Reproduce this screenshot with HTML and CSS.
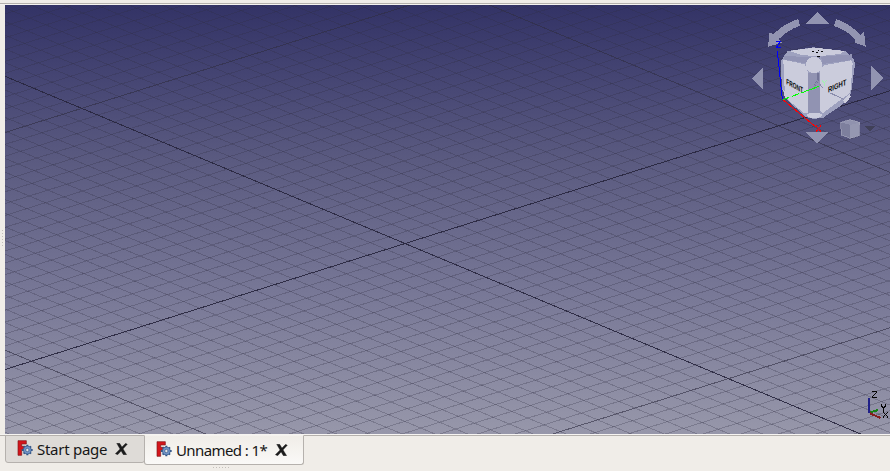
FILE: index.html
```html
<!DOCTYPE html>
<html lang="en">
<head>
<meta charset="utf-8">
<title>Unnamed : 1*</title>
<link rel="stylesheet" href="styles.css">
</head>
<body>
<div class="window">
  <div class="toolbar-edge"></div>
  <div class="workspace">
    <div class="side-handle"></div>
    <main class="viewport">
      <svg class="grid" width="885" height="429" viewBox="5 5 885 429"><g id="minor"></g><g id="major"></g></svg>
      <svg class="nav" viewBox="0 0 435 450" shape-rendering="crispEdges">
        <g fill="#9294b1">
          <path d="M217 37L252 72H183Z"/>
          <path d="M183 396H249L217 431Z"/>
          <path d="M54 201V268L21 235Z"/>
          <path d="M378 198V270L415 235Z"/>
          <path d="M160 57L165 77Q124 92 101 118L111 129L69 140L74 96L84 104Q116 71 160 57Z"/>
          <path d="M273 57L267 78Q309 93 332 119L328 127L362 140L357 95L347 105Q317 72 273 57Z"/>
        </g>
        <path fill="#9ea1bf" d="M128 153L205 142L300 153L327 178L330 194L318 280L292 314L235 353L205 357L182 350L126 300L111 267L107 185Z"/>
        <g fill="#cbccdc">
          <path d="M132 153L208 143L300 153L285 162L220 169L170 165Z"/>
          <path d="M115 179L180 193L188 214L190 337L178 340L120 292Z"/>
          <path d="M226 206L237 196L318 181L323 190L316 278L234 339L225 332Z"/>
          <path d="M115 270L136 281L139 294L128 297L117 286Z"/>
          <path d="M314 282L318 290L300 311L294 300Z"/>
        </g>
        <path fill="#9294b5" d="M116 166L180 172L201 170L183 190L116 178ZM228 170L321 163L321 180L232 192Z"/>
        <path fill="#9193b2" d="M190 219H225V340H190Z"/>
        <path fill="#737598" d="M217 219H223V240L206 266L203 262L217 238Z"/>
        <path fill="#8587a8" d="M218 169H225V185H218Z"/>
        <ellipse cx="207" cy="195" rx="24" ry="25" fill="#cbccdc"/>
        <ellipse cx="208" cy="346" rx="23" ry="8" fill="#cbccdc"/>
        <path d="M203 266L218 243L232 263M254 278L296 298" fill="none" stroke="#8b8dac" stroke-width="3"/>
        <path d="M201 154H207M213 157H219M219 151H222M228 154H234M217 170H226" stroke="#090909" stroke-width="3"/>
        <text class="cube-face" transform="matrix(.83 .46 0 1 124 252)" textLength="60" lengthAdjust="spacingAndGlyphs">FRONT</text>
        <text class="cube-face" transform="matrix(.9 -.4 0 1 249 278)" textLength="61" lengthAdjust="spacingAndGlyphs">RIGHT</text>
        <g fill="none" stroke-width="3">
          <path stroke="#00f" d="M97 153L112 298"/>
          <path stroke="#00f" d="M94 125H106L94 142H107"/>
          <path stroke="#0f0" d="M114 299L222 259"/>
          <path stroke="#a9ecb8" d="M131 292L140 289M158 283L167 280M231 241L238 249L245 241M238 249V259"/>
          <path stroke="red" d="M115 300L214 382M213 377L228 395M228 377L213 395"/>
        </g>
        <path fill="#9092ae" d="M287 367L315 359L344 367L316 375Z"/>
        <path fill="#7d7f9d" d="M287 367L316 375V415L289 405Z"/>
        <path fill="#9597b1" d="M316 375L344 367L342 407L316 415Z"/>
        <path fill="none" stroke="#a4a5bb" stroke-width="2" d="M287 367L315 359L344 367L342 407L316 415L289 405Z"/>
        <path fill="#404058" d="M358 378H392L375 396Z"/>
      </svg>
      <svg class="axes" viewBox="0 0 120 180" shape-rendering="crispEdges">
        <path d="M57 54V99" stroke="#202088" stroke-width="6"/>
        <path d="M59 98L84 90" stroke="#168016" stroke-width="6"/>
        <path d="M60 100L92 114" stroke="#851f1f" stroke-width="6"/>
        <path fill="none" stroke="#050505" stroke-width="3" d="M66 35H80V38L66 51V53H80M94 72V77L101 85L107 77V72M101 85V97M100 95V98L113 110V113M113 95V98L100 110V113"/>
      </svg>
    </main>
  </div>
  <nav class="tabs">
    <div class="tab"><svg class="logo"><use href="#app"/></svg><span class="name start">Start page</span><svg class="close"><use href="#x"/></svg></div>
    <div class="tab active"><svg class="logo"><use href="#app"/></svg><span class="name unnamed">Unnamed : 1*</span><svg class="close"><use href="#x"/></svg></div>
  </nav>
  <div class="bottom-handle"></div>
</div>
<svg class="defs">
  <symbol id="app" viewBox="0 0 48 48">
    <path fill="#d4151b" stroke="#7d1518" stroke-width="2" d="M3 2H28V12H14V19H25V28H14V46H3Z"/>
    <path d="M31 14V46M15 30H47M20 19L42 41M42 19L20 41" stroke="#315384" stroke-width="6"/>
    <circle cx="31" cy="30" r="12" fill="#7195c9" stroke="#315384" stroke-width="2"/>
    <circle cx="31" cy="30" r="5" fill="#e2e3e5" stroke="#315384" stroke-width="2"/>
  </symbol>
  <symbol id="x" viewBox="0 0 39 36">
    <path d="M5 1H14L35 35H25ZM32 1L37 4L8 35L1 32Z" fill="#1c1c1c" stroke="#1c1c1c"/>
  </symbol>
</svg>
<script src="grid.js"></script>
</body>
</html>
```
FILE: grid.js
```js
const ns = "http://www.w3.org/2000/svg";
const families = [
  { slope: 0.418, origin: 74.2, step: 13.69 },
  { slope: -0.315, origin: 371.1, step: 11.85 }
];
for (const f of families) {
  for (let i = -45; i <= 40; i++) {
    const b = f.origin + i * f.step;
    const line = document.createElementNS(ns, "line");
    line.setAttribute("x1", 0);
    line.setAttribute("y1", b);
    line.setAttribute("x2", 895);
    line.setAttribute("y2", b + 895 * f.slope);
    if (i === 0) line.setAttribute("class", "axis");
    document.getElementById(i % 20 ? "minor" : "major").append(line);
  }
}
```
FILE: styles.css
```css
* { box-sizing: border-box; }
body { margin: 0; background: #f0ede8; overflow: hidden; }
.window { width: 890px; height: 471px; display: flex; flex-direction: column; background: #f0ede8; }
.toolbar-edge { height: 5px; border-bottom: 1px solid #f5f3f0; background: linear-gradient(#f0ede8 3px, #b5b1ad 3px); flex: none; }
.workspace { display: flex; height: 429px; flex: none; }
.side-handle { width: 5px; display: flex; align-items: center; }
.side-handle::before { content: ""; width: 3px; height: 17px; margin: 35px 0 0 1px; background: radial-gradient(circle, #c4c0bb 1px, transparent 1px) 0 0 / 3px 3px; }
.viewport { position: relative; flex: 1; background: linear-gradient(#333366, #484875 84px, #5a5a80 155px, #777796 285px, #9797aa); }
.grid { display: block; shape-rendering: crispEdges; }
.grid line { stroke: #302e42; stroke-width: 1; }
#minor line { opacity: .26; }
#major line { opacity: .6; }
#major .axis { opacity: .9; stroke: #28263e; }
.nav { position: absolute; left: 740px; top: -5px; width: 145px; height: 150px; }
.cube-face { font: bold 24px "Liberation Sans", sans-serif; fill: #090909; }
.axes { position: absolute; left: 845px; top: 375px; width: 40px; height: 60px; }
.tabs { display: flex; align-items: flex-start; height: 32px; border-top: 1px solid #f6f4f1; background: linear-gradient(#b5b1ad 1px, transparent 1px); padding-left: 5px; flex: none; }
.tab { display: flex; align-items: center; width: 140px; height: 28px; border: 1px solid #b5b1ad; border-radius: 0 0 3px 3px; background: #dedbd7; padding-left: 11px; }
.tab.active { width: 160px; height: 30px; margin-left: -1px; background: linear-gradient(#f0ede8, #faf9f7); border-top-color: #f4f2ee; }
.logo { width: 16px; height: 16px; flex: none; margin-top: -2px; }
.close { width: 13px; height: 12px; flex: none; margin-left: 7px; margin-top: -1px; }
.name { font: 15px "Noto Sans", sans-serif; color: #161616; white-space: nowrap; margin-left: 4px; }
.start { width: 71px; letter-spacing: -.27px; }
.unnamed { width: 92px; letter-spacing: -.6px; }
.bottom-handle { width: 17px; height: 2px; margin: 1px 0 0 213px; background: linear-gradient(90deg, #c4c0bb 1px, transparent 1px) 0 0 / 3px 1px repeat-x; }
.defs { position: absolute; width: 0; height: 0; }
```
